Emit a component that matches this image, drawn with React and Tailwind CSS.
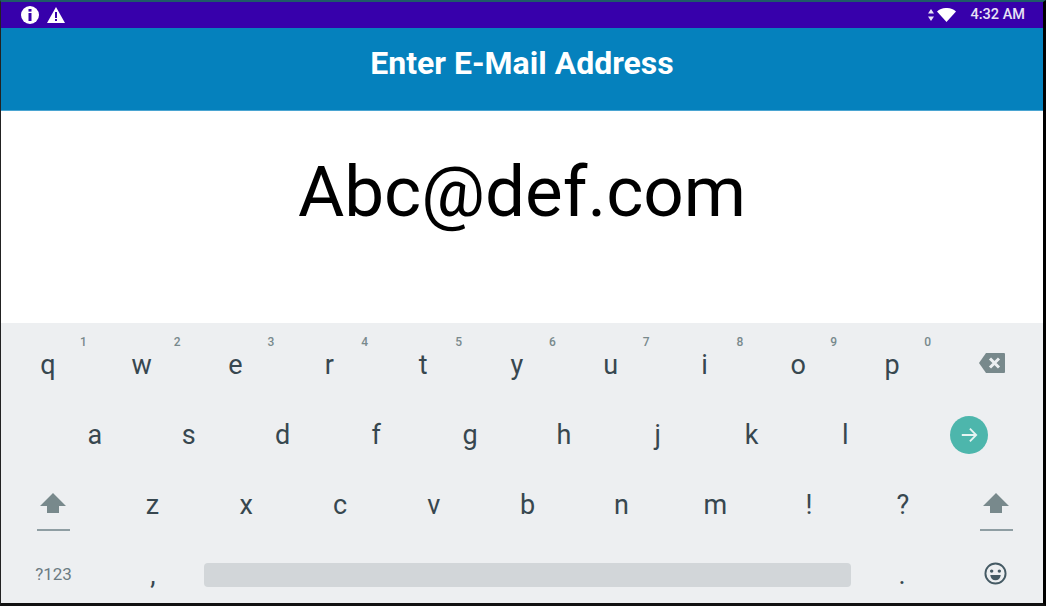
import React from "react";

const topRow = [
  ["q", "1"],
  ["w", "2"],
  ["e", "3"],
  ["r", "4"],
  ["t", "5"],
  ["y", "6"],
  ["u", "7"],
  ["i", "8"],
  ["o", "9"],
  ["p", "0"],
];
const midRow = ["a", "s", "d", "f", "g", "h", "j", "k", "l"];
const lowRow = ["z", "x", "c", "v", "b", "n", "m", "!", "?"];

const Key = ({ label, hint }) => (
  <div className="relative w-[93.8px] shrink-0 flex items-center justify-center text-[27px] leading-none text-[#37474f]">
    {label}
    {hint && (
      <span className="absolute right-[8px] top-[-1px] text-[12px] font-medium text-[#78898c]">
        {hint}
      </span>
    )}
  </div>
);

const Shift = () => (
  <div className="flex flex-col items-center pt-[16px]">
    <svg width="26" height="20" viewBox="0 0 26 20" fill="#78898c">
      <path d="M13 0 L26 13 H19 V20 H7 V13 H0 Z" />
    </svg>
    <div className="mt-[16px] h-[2px] w-[33px] bg-[#8f9ea3]" />
  </div>
);

const InfoIcon = () => (
  <svg width="18" height="18" viewBox="0 0 18 18">
    <circle cx="9" cy="9" r="9" fill="#fff" />
    <rect x="7.5" y="3" width="3" height="2.6" fill="#3700ab" />
    <rect x="7.5" y="7" width="3" height="8" fill="#3700ab" />
  </svg>
);

const WarnIcon = () => (
  <svg width="18" height="16" viewBox="0 0 18 16">
    <path d="M9 0 L18 16 H0 Z" fill="#fff" />
    <rect x="8" y="5" width="2" height="6" fill="#3700ab" />
    <rect x="8" y="12" width="2" height="2" fill="#3700ab" />
  </svg>
);

const Backspace = () => (
  <svg width="26" height="20" viewBox="0 0 26 20">
    <path d="M7 0 H25 Q26 0 26 1 V19 Q26 20 25 20 H7 L0 10 Z" fill="#78898c" />
    <path d="M11 5.5 L20 14.5 M20 5.5 L11 14.5" stroke="#eceff1" strokeWidth="3" />
  </svg>
);

const Emoji = () => (
  <svg width="23" height="23" viewBox="0 0 24 24" fill="none">
    <circle cx="12" cy="12" r="10.5" stroke="#455a64" strokeWidth="2" />
    <circle cx="8" cy="9.5" r="1.8" fill="#455a64" />
    <circle cx="16" cy="9.5" r="1.8" fill="#455a64" />
    <path d="M6.5 13.5 H17.5 C17 17 15 19 12 19 C9 19 7 17 6.5 13.5 Z" fill="#455a64" />
  </svg>
);

export default function App() {
  return (
    <div className="w-[1046px] h-[606px] overflow-hidden bg-black flex flex-col border-t-2 border-t-[#1f5a68] border-l border-r-[3px] border-b-[3px] border-l-[#222] border-r-black border-b-[#111] font-['Roboto',sans-serif]">
      <div className="h-[26px] shrink-0 bg-[#3700ab] flex items-center pl-[20px] pr-[18px] text-white">
        <InfoIcon />
        <div className="ml-[8px]">
          <WarnIcon />
        </div>
        <div className="ml-auto flex items-center">
          <svg width="6" height="12" viewBox="0 0 6 12" fill="#e8e3f5">
            <path d="M3 0 L6 4.5 H0 Z M3 12 L0 7.5 H6 Z" />
          </svg>
          <svg className="ml-[3px]" width="19" height="14" viewBox="0 0 19 14" fill="#fff">
            <path d="M0 3.5 C5 -1.2 14 -1.2 19 3.5 L9.5 14 Z" />
          </svg>
          <span className="ml-[15px] text-[14.5px] font-medium text-[#e8e3f5]">4:32 AM</span>
        </div>
      </div>

      <div className="h-[83px] shrink-0 bg-[#0581bd] flex items-center justify-center pb-[12px] border-b border-b-[#4aa5d2]">
        <h1 className="text-[32px] font-bold text-white">Enter E-Mail Address</h1>
      </div>

      <div className="h-[212px] shrink-0 bg-white flex items-center justify-center pb-[52px]">
        <span className="text-[71px] leading-none text-black">Abc@def.com</span>
      </div>

      <div className="flex-1 bg-[#edeff1] flex flex-col">
        <div className="h-[70px] shrink-0 flex pt-[14px]">
          {topRow.map(([label, hint]) => (
            <Key key={label} label={label} hint={hint} />
          ))}
          <div className="flex-1 flex items-center justify-center pl-[2px] pb-[4px]">
            <Backspace />
          </div>
        </div>

        <div className="h-[70px] shrink-0 flex pt-[14px] pl-[47px]">
          {midRow.map((label) => (
            <Key key={label} label={label} />
          ))}
          <div className="flex-1 flex items-center justify-center pl-[2px] pb-[1px]">
            <div className="w-[38px] h-[38px] rounded-full bg-[#4db6ac] flex items-center justify-center">
              <svg width="18" height="18" viewBox="0 0 20 20" fill="none" stroke="#e6f4f2" strokeWidth="2">
                <path d="M2 10 H18 M11 3 L18 10 L11 17" />
              </svg>
            </div>
          </div>
        </div>

        <div className="h-[70px] shrink-0 flex pt-[14px]">
          <div className="w-[104.6px] shrink-0 flex justify-center">
            <Shift />
          </div>
          {lowRow.map((label) => (
            <Key key={label} label={label} />
          ))}
          <div className="flex-1 flex justify-center">
            <Shift />
          </div>
        </div>

        <div className="flex-1 flex pt-[14px]">
          <div className="w-[105px] shrink-0 flex items-center justify-center text-[17px] text-[#6b7b82]">
            ?123
          </div>
          <Key label="," />
          <div className="w-[647px] ml-[4.2px] h-[24px] self-center rounded-[4px] bg-[#d2d6d9]" />
          <div className="w-[94px] ml-[4px] shrink-0 flex items-center justify-center text-[27px] leading-none text-[#37474f]">
            .
          </div>
          <div className="flex-1 flex items-center justify-center pb-[4px]">
            <Emoji />
          </div>
        </div>
      </div>
    </div>
  );
}
